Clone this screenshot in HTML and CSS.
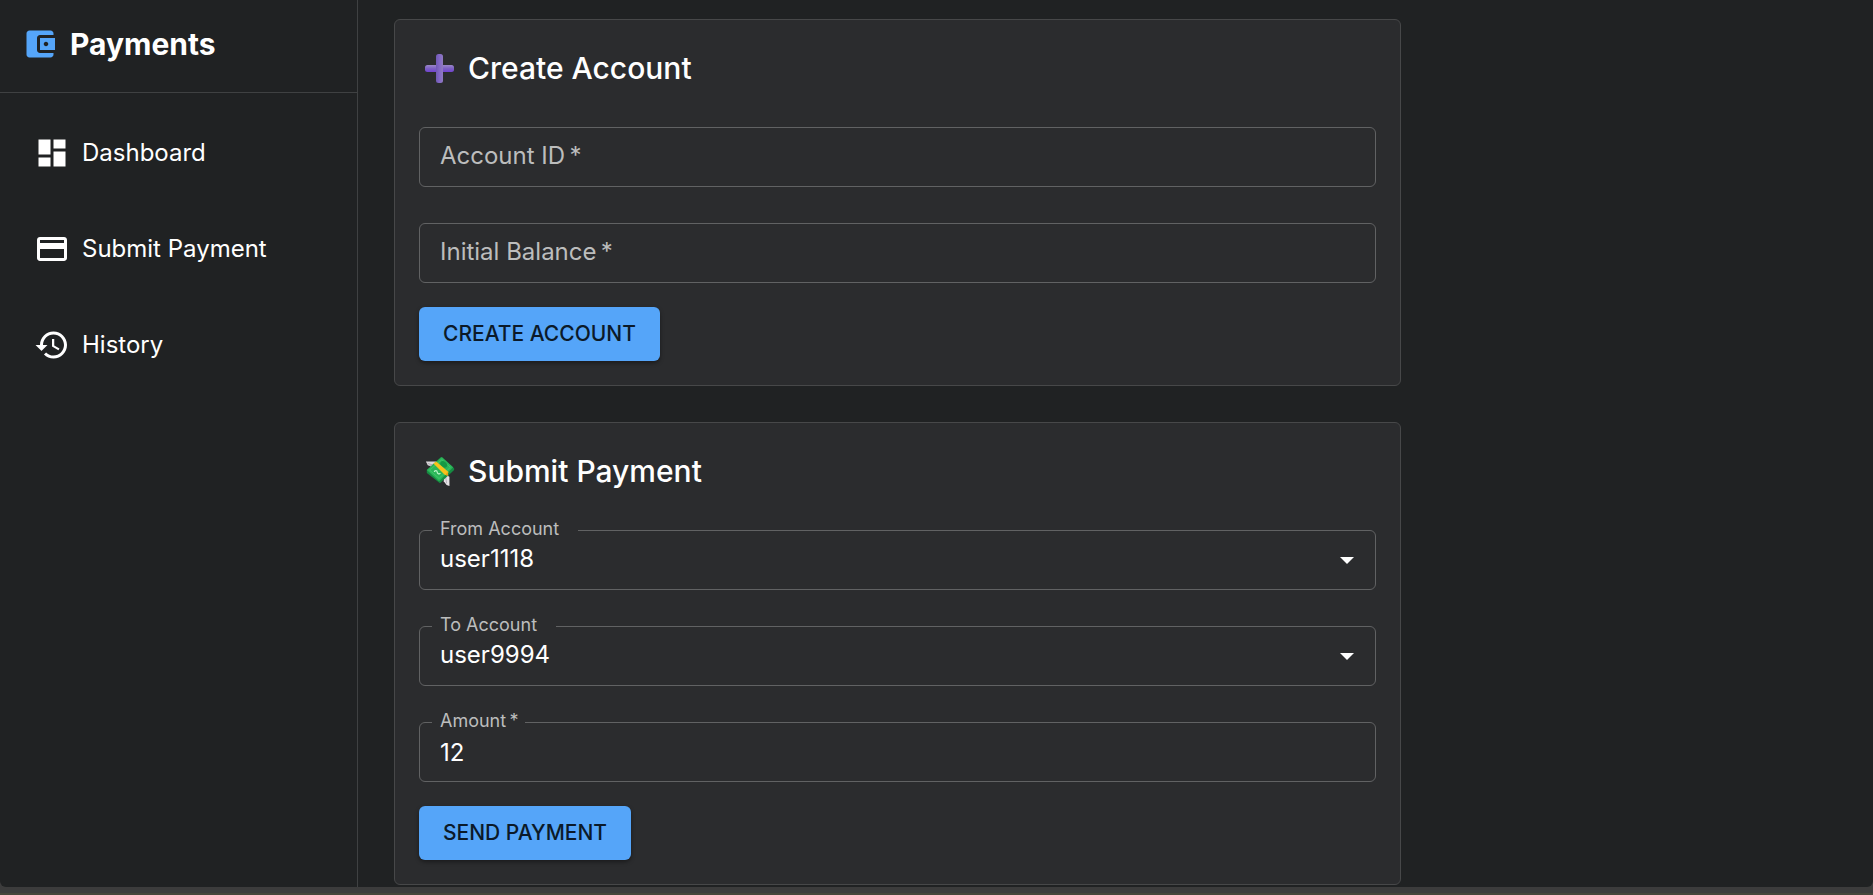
FILE: index.html
```html
<!DOCTYPE html>
<html lang="en">
<head>
<meta charset="utf-8">
<title>Payments</title>
<meta name="viewport" content="width=device-width, initial-scale=1">
<link rel="stylesheet" href="styles.css">
</head>
<body>
<div class="app">
  <aside class="sidebar">
    <div class="brand">
      <svg class="icon icon-brand" viewBox="0 0 24 24" aria-hidden="true"><path d="M21 18v1c0 1.1-.9 2-2 2H5c-1.11 0-2-.9-2-2V5c0-1.1.89-2 2-2h14c1.1 0 2 .9 2 2v1h-9c-1.11 0-2 .9-2 2v8c0 1.1.89 2 2 2zm-9-2h10V8H12zm4-2.500c-.83 0-1.500-.67-1.500-1.500s.67-1.500 1.500-1.500 1.500.67 1.500 1.500-.67 1.500-1.500 1.500"/></svg>
      <span class="brand-name">Payments</span>
    </div>
    <nav class="nav">
      <a class="nav-item" href="#dashboard">
        <svg class="icon" viewBox="0 0 24 24" aria-hidden="true"><path d="M3 13h8V3H3zm0 8h8v-6H3zm10 0h8V11h-8zm0-18v6h8V3z"/></svg>
        Dashboard
      </a>
      <a class="nav-item" href="#submit-payment">
        <svg class="icon" viewBox="0 0 24 24" aria-hidden="true"><path d="M20 4H4c-1.110 0-1.990.89-1.990 2L2 18c0 1.110.89 2 2 2h16c1.110 0 2-.89 2-2V6c0-1.110-.89-2-2-2m0 14H4v-6h16zm0-10H4V6h16z"/></svg>
        Submit Payment
      </a>
      <a class="nav-item" href="#history">
        <svg class="icon" viewBox="0 0 24 24" aria-hidden="true"><path d="M13 3c-4.970 0-9 4.030-9 9H1l3.890 3.890.070.140L9 12H6c0-3.870 3.130-7 7-7s7 3.130 7 7-3.130 7-7 7c-1.930 0-3.680-.79-4.940-2.060l-1.420 1.420C8.270 19.990 10.510 21 13 21c4.970 0 9-4.030 9-9s-4.030-9-9-9m-1 5v5l4.280 2.540.72-1.210-3.500-2.080V8z"/></svg>
        History
      </a>
    </nav>
  </aside>

  <main class="main">
    <form class="card">
      <h2 class="card-title">
        <svg class="emoji" viewBox="0 0 32 32" aria-hidden="true">
          <defs>
            <linearGradient id="bar-h" x1="0" y1="0" x2="0" y2="1">
              <stop offset="0" stop-color="#9a86c8"/><stop offset=".5" stop-color="#7d61c4"/><stop offset="1" stop-color="#7143d0"/>
            </linearGradient>
            <linearGradient id="bar-v" x1="0" y1="0" x2="1" y2="0">
              <stop offset="0" stop-color="#7059b5"/><stop offset=".5" stop-color="#8368c6"/><stop offset="1" stop-color="#8f7ac0"/>
            </linearGradient>
          </defs>
          <rect x="1" y="13" width="29" height="7" rx="2.500" fill="url(#bar-h)"/>
          <rect x="12" y="2" width="7" height="29" rx="2.500" fill="url(#bar-v)"/>
        </svg>
        Create Account
      </h2>
      <div class="fields">
        <div class="field field-empty">
          <label class="field-label" for="account-id">Account ID&thinsp;*</label>
          <input class="control" id="account-id" type="text" required>
        </div>
        <div class="field field-empty">
          <label class="field-label" for="initial-balance">Initial Balance&thinsp;*</label>
          <input class="control" id="initial-balance" type="text" inputmode="decimal" required>
        </div>
      </div>
      <button class="button" type="submit">CREATE ACCOUNT</button>
    </form>

    <form class="card">
      <h2 class="card-title">
        <svg class="emoji" viewBox="-1 -1 34 34" aria-hidden="true">
          <path d="M1 6L14 6 15 14 7 15 6 11 3 10z" fill="#dcd8dc"/>
          <path d="M3 8L13 11M5 10L12 13" stroke="#aaa4ac" stroke-width="1"/>
          <path d="M20 19L26 22 26 32 23 31 20 27z" fill="#e5e1e5"/>
          <path d="M22 22L23 29" stroke="#b4adb6" stroke-width="1"/>
          <path d="M17 1L31 13 31 15 16 29 2 18 2 15z" fill="#168b42"/>
          <path d="M18 1L30 12 15 27 2 15z" fill="#2bb558"/>
          <path d="M18 4L27 12 15 24 5 15z" fill="none" stroke="#3fc96b" stroke-width="1"/>
          <ellipse cx="20" cy="9" rx="4" ry="3" fill="#159944" transform="rotate(40 20 9)"/>
          <path d="M9 8L12 6 25 17 24 21 21 20z" fill="#f7c21b"/>
          <path d="M24 17L25 21 22 20z" fill="#e99a16"/>
          <path d="M10 17c0-2 3-2 3 0s3 3 3 1" fill="none" stroke="#b9f5c8" stroke-width="1.300"/>
        </svg>
        Submit Payment
      </h2>
      <div class="fields">
        <fieldset class="field field-filled">
          <legend class="notch notch-wide"><label for="from-account">From Account</label></legend>
          <select class="control" id="from-account"><option>user1118</option><option>user9994</option></select>
          <svg class="caret" viewBox="0 0 14 7" aria-hidden="true"><path d="M0 0h14L7 7z"/></svg>
        </fieldset>
        <fieldset class="field field-filled">
          <legend class="notch notch-wide"><label for="to-account">To Account</label></legend>
          <select class="control" id="to-account"><option>user9994</option><option>user1118</option></select>
          <svg class="caret" viewBox="0 0 14 7" aria-hidden="true"><path d="M0 0h14L7 7z"/></svg>
        </fieldset>
        <fieldset class="field field-filled">
          <legend class="notch"><label for="amount">Amount&thinsp;*</label></legend>
          <input class="control" id="amount" type="text" inputmode="decimal" value="12" required>
        </fieldset>
      </div>
      <button class="button" type="submit">SEND PAYMENT</button>
    </form>
  </main>
</div>
<div class="window-edge"></div>
</body>
</html>
```
FILE: styles.css
```css
* {
  box-sizing: border-box;
}

body {
  margin: 0;
  min-height: 100vh;
  display: flex;
  flex-direction: column;
  background: #3c3c3c;
  color: #fff;
  font-family: Inter, "Liberation Sans", sans-serif;
  font-size: 24px;
  line-height: 36px;
}

.app {
  flex: 1;
  display: flex;
  background: #202223;
  border-radius: 0 0 6px 6px;
}

.window-edge {
  height: 8px;
  border-bottom: 2px solid #45463a;
}

.icon {
  width: 36px;
  height: 36px;
  flex: none;
  fill: currentColor;
}

.sidebar {
  flex: none;
  width: 358px;
  border-right: 1px solid #3f4142;
}

.brand {
  display: flex;
  align-items: center;
  gap: 12px;
  padding: 20px 22px 24px;
  border-bottom: 1px solid #3f4142;
}

.icon-brand {
  color: #55a5f9;
}

.brand-name {
  font-size: 30px;
  font-weight: 700;
  line-height: 48px;
}

.nav {
  display: flex;
  flex-direction: column;
  padding: 12px 0;
}

.nav-item {
  display: flex;
  align-items: center;
  gap: 12px;
  padding: 30px 34px;
  color: inherit;
  text-decoration: none;
}

.main {
  flex: 1;
  display: flex;
  flex-direction: column;
  gap: 36px;
  padding: 19px 36px 2px;
}

.card {
  width: 100%;
  max-width: 1007px;
  padding: 24px;
  background: #2b2c2e;
  border: 1px solid #474849;
  border-radius: 6px;
}

.card-title {
  display: flex;
  align-items: center;
  gap: 12px;
  margin: 0 0 35px;
  padding-left: 5px;
  font-size: 30px;
  font-weight: 500;
  line-height: 48px;
}

.emoji {
  width: 32px;
  height: 32px;
  flex: none;
}

.fields {
  display: flex;
  flex-direction: column;
  gap: 36px;
  margin-bottom: 24px;
}

.field {
  position: relative;
  display: grid;
  min-width: 0;
  margin: 0;
  padding: 0;
  border: 1px solid #616263;
  border-radius: 6px;
}

.field-empty > * {
  grid-area: 1 / 1;
}

.field-label {
  padding: 10px 20px;
  color: #bcbdbd;
  pointer-events: none;
}

.control {
  width: 100%;
  height: 58px;
  padding: 0 20px;
  border: 0;
  background: transparent;
  color: inherit;
  font: inherit;
  appearance: none;
  outline: 0;
}

select.control {
  padding-bottom: 3px;
}

/* The label sits in the border, so half of its height rises above the box. */
.field-filled {
  margin-top: -12px;
}

.field-filled .control {
  margin-top: -12px;
}

.notch {
  margin-left: 12px;
  padding: 0 7px 3px 8px;
  color: #bcbdbd;
  font-size: 18px;
  line-height: 22px;
}

.notch-wide {
  padding-right: 19px;
}

.caret {
  position: absolute;
  right: 21px;
  bottom: 25px;
  width: 14px;
  height: 7px;
  fill: #fff;
  pointer-events: none;
}

.button {
  display: block;
  height: 54px;
  padding: 0 24px;
  border: 0;
  border-radius: 6px;
  background: #55a5f9;
  color: #0b1a29;
  box-shadow: 0 2px 4px rgba(0, 0, 0, 0.4);
  font: inherit;
  font-size: 21px;
  font-weight: 500;
}
```
